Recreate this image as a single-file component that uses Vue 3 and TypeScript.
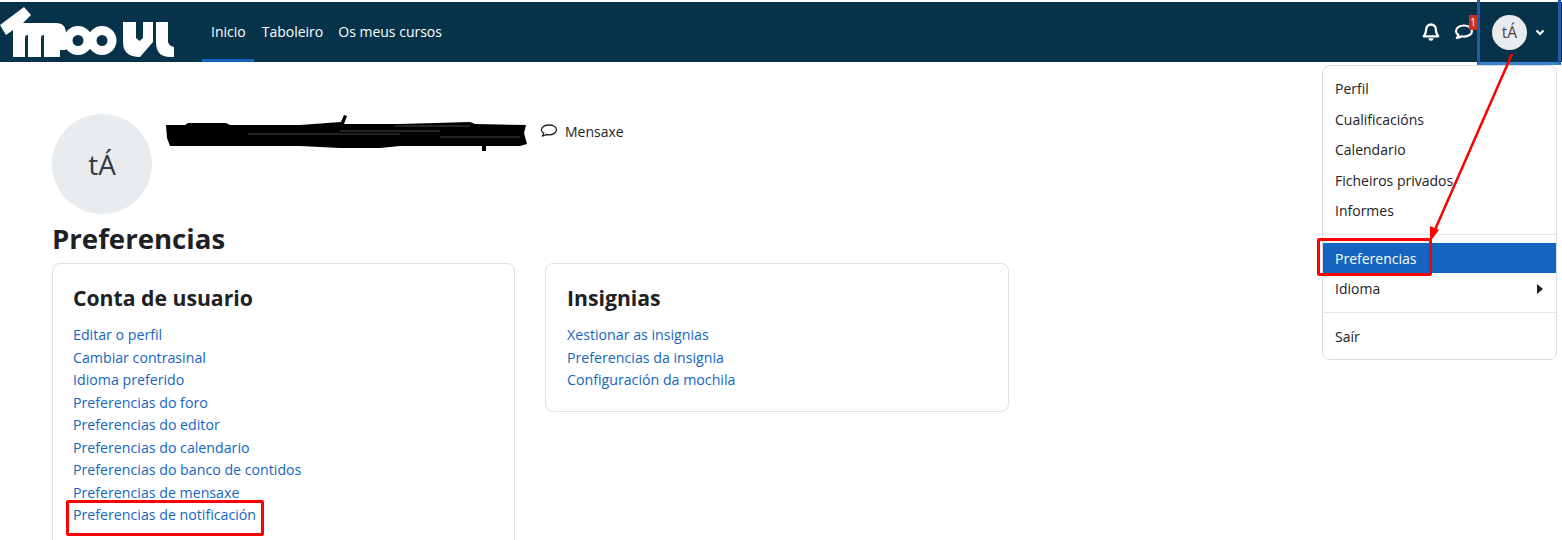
<template>
  <div class="page">
    <header class="navbar">
      <svg class="logo" viewBox="0 2 176 60" aria-hidden="true">
        <path d="M0 25 L24 7 L31 15 L23 23 H56 Q66 23 66 34 V57 H13 V30 L6 35 Z" fill="#fff" />
        <path d="M25 57 V38 Q25 35 28 35 V57 Z M41 57 V38 Q41 35 44 35 V57 Z" fill="#07334a" />
        <path d="M60 57 H67 V50 H60 Z" fill="#07334a" />
        <circle cx="78" cy="40.500" r="10" fill="none" stroke="#fff" stroke-width="9" />
        <circle cx="102" cy="40.500" r="10" fill="none" stroke="#fff" stroke-width="9" />
        <path d="M123 22 H136 V38 L139.500 41 L143 38 V22 H153 V42 L140 57 Q123 57 123 42 Z" fill="#fff" />
        <path d="M156 22 H168 V42 Q169 46 174 47 V57 H170 Q156 57 156 42 Z" fill="#fff" />
      </svg>
      <nav class="nav-links">
        <a class="nav-link active">Inicio</a>
        <a class="nav-link">Taboleiro</a>
        <a class="nav-link">Os meus cursos</a>
      </nav>
      <div class="nav-tools">
        <svg class="tool-icon" viewBox="0 0 20 20" aria-hidden="true">
          <path d="M10 2.500a4.800 4.800 0 0 0-4.800 4.800c0 4.500-1.700 6-2.400 7h14.400c-.7-1-2.400-2.500-2.400-7A4.800 4.800 0 0 0 10 2.500Z" fill="none" stroke="#fff" stroke-width="2.300" stroke-linejoin="round" />
          <path d="M7.500 16.200a2.500 2.500 0 0 0 5 0Z" fill="#fff" />
        </svg>
        <div class="msg-tool">
          <svg class="tool-icon" viewBox="0 0 20 20" aria-hidden="true">
            <path d="M10 3.500c-4.700 0-8 2.500-8 5.500 0 1.600 1 3 2.400 4-.2 1.200-.9 2.200-1.600 3 1.700-.2 3.300-.9 4.300-1.700.9.200 1.900.3 2.900.3 4.700 0 8-2.600 8-5.600s-3.300-5.500-8-5.500Z" fill="none" stroke="#fff" stroke-width="2.200" stroke-linejoin="round" />
          </svg>
          <span class="badge">1</span>
        </div>
        <div class="user-menu">
          <span class="user-avatar">tÁ</span>
          <svg class="caret" viewBox="0 0 10 7" aria-hidden="true">
            <path d="M1.500 1.500 5 5l3.500-3.500" fill="none" stroke="#fff" stroke-width="2.200" />
          </svg>
        </div>
      </div>
    </header>

    <main class="content">
      <div class="profile">
        <span class="profile-avatar">tÁ</span>
        <div class="profile-name">
          <!-- hand-drawn redaction over the user's name -->
          <svg class="scribble" viewBox="165 115 364 38" aria-hidden="true">
            <path d="M166 125 H185 L188 123 H226 L230 125 H300 L341 122 L344 115 L347 116 L344 124 H400 L470 122 L475 124 L526 125 L524 133 L527 144 L520 146 H486 V151 H482 V146 H400 L380 148 H340 L300 146 H230 L200 146 L170 146 L167 138 Z" fill="#000" />
            <path d="M248 134 H400 M340 131 H440 M395 126 H470 M440 137 H520" fill="none" stroke="#666" stroke-width="0.700" />
          </svg>
          <a class="send-msg">
            <svg class="msg-icon" viewBox="0 0 18 18" aria-hidden="true">
              <path d="M9 3c-4.200 0-7.500 2.100-7.500 4.800 0 1.400.9 2.700 2.300 3.600-.2 1-.8 1.900-1.500 2.600 1.500-.2 2.900-.8 3.900-1.500.9.200 1.800.3 2.800.3 4.200 0 7.500-2.100 7.500-5S13.200 3 9 3Z" fill="none" stroke="#1d2125" stroke-width="1.300" stroke-linejoin="round" />
            </svg>
            Mensaxe
          </a>
        </div>
      </div>
      <h1 class="title">Preferencias</h1>
      <div class="cards">
        <section v-for="card in cards" :key="card.title" class="card" :class="card.kind">
          <h2 class="card-title">{{ card.title }}</h2>
          <ul class="card-links">
            <li v-for="link in card.links" :key="link"><a>{{ link }}</a></li>
          </ul>
        </section>
      </div>
    </main>

    <div class="dropdown">
      <a class="item">Perfil</a>
      <a class="item">Cualificacións</a>
      <a class="item">Calendario</a>
      <a class="item">Ficheiros privados</a>
      <a class="item">Informes</a>
      <div class="divider"></div>
      <a class="item selected">Preferencias</a>
      <a class="item has-sub">Idioma<span class="sub-arrow"></span></a>
      <div class="divider"></div>
      <a class="item">Saír</a>
    </div>

    <!-- red and blue marks drawn over the screenshot -->
    <div class="mark blue-box"></div>
    <div class="mark red-box menu-box"></div>
    <div class="mark red-box link-box"></div>
    <svg class="arrow" width="1562" height="540" aria-hidden="true">
      <line x1="1512" y1="54" x2="1434" y2="232" stroke="#f00" stroke-width="2.500" />
      <path d="M1430 242 L1430 226 L1439 230 Z" fill="#f00" />
    </svg>
  </div>
</template>

<script setup lang="ts">
const cards = [
  {
    title: 'Conta de usuario',
    kind: 'account',
    links: [
      'Editar o perfil',
      'Cambiar contrasinal',
      'Idioma preferido',
      'Preferencias do foro',
      'Preferencias do editor',
      'Preferencias do calendario',
      'Preferencias do banco de contidos',
      'Preferencias de mensaxe',
      'Preferencias de notificación',
    ],
  },
  {
    title: 'Insignias',
    kind: 'badges',
    links: ['Xestionar as insignias', 'Preferencias da insignia', 'Configuración da mochila'],
  },
]
</script>

<style>
html, body { margin: 0; background: #fff; overflow: hidden; }
</style>

<style scoped>
.page {
  position: relative;
  width: 1562px;
  height: 540px;
  overflow: hidden;
  padding-top: 2px;
  box-sizing: border-box;
  font-family: "Open Sans", "Noto Sans", sans-serif;
  font-size: 14px;
  color: #1d2125;
}

.navbar {
  display: flex;
  align-items: center;
  height: 60px;
  background: #07334a;
  color: #fff;
}
.logo { width: 176px; height: 60px; flex-shrink: 0; }
.nav-links { display: flex; height: 100%; margin-left: 26px; }
.nav-link {
  display: flex;
  align-items: center;
  padding: 2px 8px 0;
  border-bottom: 3px solid transparent;
  box-sizing: border-box;
  height: 100%;
}
.nav-link.active { border-bottom-color: #1565c0; padding-left: 9px; }
.nav-link:last-child { margin-left: -1px; }

.nav-tools { display: flex; align-items: center; margin-left: auto; }
.tool-icon { width: 20px; height: 20px; display: block; }
.msg-tool { position: relative; margin-left: 13px; }
.badge {
  position: absolute;
  top: -7px;
  right: -3px;
  width: 8px;
  height: 15px;
  background: #ca3120;
  font-size: 10px;
  line-height: 15px;
  text-align: center;
}
.user-menu { display: flex; align-items: center; width: 85px; box-sizing: border-box; padding-left: 15px; margin-left: 3px; }
.user-avatar {
  display: flex;
  align-items: center;
  justify-content: center;
  width: 35px;
  height: 35px;
  border-radius: 50%;
  background: #e9ecef;
  color: #444;
  font-size: 15.500px;
}
.caret { width: 10px; height: 7px; margin-left: 8px; }

.content { padding: 52px 0 0 52px; }
.profile { display: flex; align-items: flex-start; }
.profile-avatar {
  display: flex;
  align-items: center;
  justify-content: center;
  width: 100px;
  height: 100px;
  border-radius: 50%;
  background: #e9ecef;
  color: #343a40;
  font-size: 28px;
  flex-shrink: 0;
}
.profile-name { display: flex; align-items: flex-start; margin-left: 13px; }
.scribble { width: 364px; height: 38px; display: block; margin-top: 1px; }
.send-msg { display: flex; align-items: center; margin: 7px 0 0 11px; gap: 7px; height: 20px; }
.msg-icon { width: 18px; height: 18px; }

.title { margin: 5px 0 6px; font-size: 27.600px; line-height: 38px; font-weight: 700; color: #1d2125; }
.cards { display: flex; gap: 30px; align-items: flex-start; }
.card {
  width: 463px;
  box-sizing: border-box;
  border: 1px solid #dee2e6;
  border-radius: 8px;
  padding: 20px;
}
.card.account { height: 320px; }
.card.badges { height: 149px; width: 464px; padding-left: 21px; }
.card-title { margin: 0 0 12px; font-size: 21.200px; line-height: 28px; font-weight: 700; color: #1d2125; }
.card-links { list-style: none; margin: 0; padding: 0; font-size: 14.200px; }
.card-links li { height: 22.500px; line-height: 22.500px; }
.card-links a { color: #1565c0; }

.dropdown {
  position: absolute;
  left: 1322px;
  top: 65px;
  width: 235px;
  height: 295px;
  box-sizing: border-box;
  padding-top: 8px;
  background: #fff;
  border: 1px solid #d9dcdf;
  border-radius: 8px;
}
.item {
  display: flex;
  align-items: center;
  justify-content: space-between;
  height: 30.400px;
  padding: 0 13px 0 12px;
}
.item:first-child { margin-top: -1px; padding-bottom: 1px; }
.item.selected { background: #1565c0; color: #fff; }
.divider { height: 1px; background: #e4e7ea; margin: 8px 0; }
.divider:nth-last-child(2) { margin-bottom: 9px; }
.sub-arrow {
  width: 0;
  height: 0;
  border-left: 6px solid #1d2125;
  border-top: 5px solid transparent;
  border-bottom: 5px solid transparent;
}

.mark { position: absolute; box-sizing: border-box; pointer-events: none; }
.blue-box {
  left: 1477px;
  top: 0;
  width: 84px;
  height: 65px;
  border: 3px solid #1f5da6;
  border-top: 0;
  border-bottom-color: #3c7fca;
}
.red-box { border: 3px solid #f00; border-radius: 2px; }
.menu-box { left: 1317px; top: 238px; width: 115px; height: 38px; }
.link-box { left: 66px; top: 500px; width: 198px; height: 36px; }
.arrow { position: absolute; left: 0; top: 0; pointer-events: none; }
</style>
